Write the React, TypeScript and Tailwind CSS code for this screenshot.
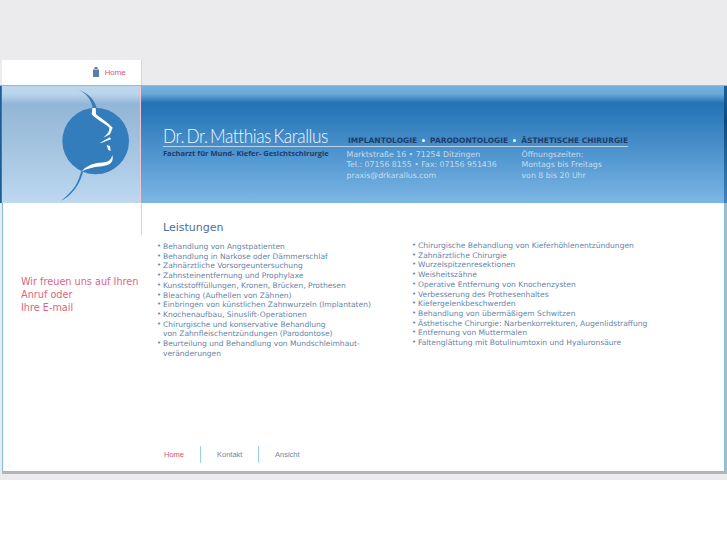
const left = [
  ["Behandlung von Angstpatienten"],
  ["Behandlung in Narkose oder Dämmerschlaf"],
  ["Zahnärztliche Vorsorgeuntersuchung"],
  ["Zahnsteinentfernung und Prophylaxe"],
  ["Kunststofffüllungen, Kronen, Brücken, Prothesen"],
  ["Bleaching (Aufhellen von Zähnen)"],
  ["Einbringen von künstlichen Zahnwurzeln (Implantaten)"],
  ["Knochenaufbau, Sinuslift-Operationen"],
  ["Chirurgische und konservative Behandlung", "von Zahnfleischentzündungen (Parodontose)"],
  ["Beurteilung und Behandlung von Mundschleimhaut-", "veränderungen"],
];
const right = [
  ["Chirurgische Behandlung von Kieferhöhlenentzündungen"],
  ["Zahnärztliche Chirurgie"],
  ["Wurzelspitzenresektionen"],
  ["Weisheitszähne"],
  ["Operative Entfernung von Knochenzysten"],
  ["Verbesserung des Prothesenhaltes"],
  ["Kiefergelenkbeschwerden"],
  ["Behandlung von übermäßigem Schwitzen"],
  ["Ästhetische Chirurgie: Narbenkorrekturen, Augenlidstraffung"],
  ["Entfernung von Muttermalen"],
  ["Faltenglättung mit Botulinumtoxin und Hyaluronsäure"],
];

function Services({ items }: { items: string[][] }) {
  return (
    <ul className="flex flex-col">
      {items.map((lines) => (
        <li key={lines[0]} className="flex text-[7.56px] leading-[9.7px] text-[#6583a8]">
          <span className="w-[6px] shrink-0 text-[7px]">•</span>
          <span className="whitespace-nowrap">
            {lines.map((l) => (
              <span key={l} className="block">{l}</span>
            ))}
          </span>
        </li>
      ))}
    </ul>
  );
}

function Face() {
  return (
    <svg width="95" height="117" viewBox="0 3 285 351" className="block">
      <circle cx="137" cy="168" r="100" fill="#347dbd" />
      <path d="M85 14 C110 25 125 45 128 70 L140 70 C135 45 115 25 85 14 Z" fill="#347dbd" />
      <path d="M95 256 L85 285 C75 310 55 330 33 347 C60 335 80 310 92 282 L101 256 Z" fill="#347dbd" />
      <path d="M127 69 L137 69 L138 88 C150 98 170 110 188 128 L180 148 L160 158 C168 150 180 140 178 128 C165 115 140 105 125 88 Z" fill="#fff" />
      <path d="M148 175 L165 165 L180 157 L183 163 L170 167 L160 172 Z" fill="#fff" />
      <path d="M170 180 L180 183 L182 198 L175 195 Z" fill="#fff" />
      <path d="M187 210 C192 232 180 240 160 243 C135 246 110 250 95 260 C105 245 125 235 150 233 C170 232 182 230 187 210 Z" fill="#fff" />
    </svg>
  );
}

export default function App() {
  return (
    <div className="h-[545px] w-[727px] overflow-hidden bg-white font-['DejaVu_Sans',sans-serif]">
      <div className="flex h-[480px] flex-col bg-[#ebebed] pt-[60px]">
        <div className="ml-[2px] flex h-[25px] w-[139.5px] items-center justify-end gap-[6px] border-r border-[#f3c6d0] bg-white pr-[15px]">
          <svg width="6" height="10" viewBox="0 0 6 10" className="mb-[2px]">
            <rect x="1.5" y="0" width="3" height="2" fill="#5b7da6" />
            <rect x="0" y="2.5" width="6" height="7.5" fill="#5b7da6" />
          </svg>
          <span className="font-['Liberation_Sans',sans-serif] text-[7.8px] text-[#d9536e]">Home</span>
        </div>

        <div className="flex h-[118px] border-t border-[#7fc0de] bg-[linear-gradient(90deg,#0f4f86_0px,#3d8cc4_2px)]">
          <div className="ml-[2px] w-[139px] shrink-0 border-r border-[#f3c6d0] bg-[linear-gradient(180deg,#bcd6ee_0px,#bad4ec_8px,#93b6d6_18px,#a3c3e0_60px,#bdd8f0_117px)] pl-[48px]">
            <Face />
          </div>
          <div className="flex flex-1 flex-col bg-[linear-gradient(180deg,#74b1e0_0px,#6aa8da_8px,#2272b5_17px,#4d93cd_65px,#7cb6e4_117px)] pl-[22px]">
            <div className="mt-[41px] flex h-[20px] w-[465px] items-end border-b border-[#b5d3ec]">
              <div className="w-[184px] origin-left scale-x-[0.905] whitespace-nowrap font-['Lato',sans-serif] text-[19px] leading-[20px] font-light tracking-[-0.45px] [word-spacing:-2px] text-[#eef6fc]">
                Dr. Dr. Matthias Karallus
              </div>
              <div className="ml-[1.5px] flex h-[12px] items-center gap-[5px] whitespace-nowrap text-[7.5px] leading-[9px] font-bold text-[#1d3c68]">
                <span>IMPLANTOLOGIE</span>
                <span className="size-[3px] rounded-full bg-white" />
                <span>PARODONTOLOGIE</span>
                <span className="size-[3px] rounded-full bg-white" />
                <span>ÄSTHETISCHE CHIRURGIE</span>
              </div>
            </div>
            <div className="flex">
              <div className="mt-[2px] w-[183.5px] whitespace-nowrap font-['Open_Sans',sans-serif] text-[7.5px] leading-[9px] font-bold text-[#1d3c68]">
                Facharzt für Mund- Kiefer- Gesichtschirurgie
              </div>
              <div className="mt-[3px] flex text-[7.82px] leading-[10.4px] whitespace-nowrap text-[#c4dcf0]">
                <div className="w-[175px]">
                  <div>Marktstraße 16 • 71254 Ditzingen</div>
                  <div>Tel.: 07156 8155 • Fax: 07156 951436</div>
                  <div>praxis@drkarallus.com</div>
                </div>
                <div>
                  <div>Öffnungszeiten:</div>
                  <div>Montags bis Freitags</div>
                  <div>von 8 bis 20 Uhr</div>
                </div>
              </div>
            </div>
          </div>
          <div className="w-[3px] shrink-0 bg-[linear-gradient(180deg,#1d5f96,#0d4a7e_30%,#3d86bd)]" />
        </div>

        <div className="ml-[2px] flex h-[269px] w-[723px] border-r border-b border-l border-[#7fc0de] bg-white shadow-[1px_1px_0_1px_#b5b5b8]">
          <div className="w-[138px] shrink-0">
            <div className="ml-[137.5px] h-[32px] w-px bg-[#f3c6d0]" />
            <div className="mt-[41px] whitespace-nowrap pl-[18px] font-['DejaVu_Sans',sans-serif] text-[9.7px] leading-[12.8px] font-normal text-[#dc6580]">
              <div>Wir freuen uns auf Ihren</div>
              <div>Anruf oder</div>
              <div>Ihre E-mail</div>
            </div>
          </div>
          <div className="flex flex-1 flex-col">
            <div className="flex h-[156px] pl-[16px]">
              <div className="w-[255px]">
                <h2 className="mt-[17px] pl-[6px] text-[11px] leading-[16px] font-normal text-[#4a6f9c]">Leistungen</h2>
                <div className="mt-[6px]"><Services items={left} /></div>
              </div>
              <div className="mt-[38px]"><Services items={right} /></div>
            </div>
            <div className="mt-[87px] flex h-[17px] items-center pl-[23px] font-['Liberation_Sans',sans-serif] text-[7.5px] text-[#6f88a8]">
              <span className="w-[36px] text-[#d9536e]">Home</span>
              <span className="h-[17px] w-px bg-[#9fd0ea]" />
              <span className="w-[57px] pl-[16px]">Kontakt</span>
              <span className="h-[17px] w-px bg-[#9fd0ea]" />
              <span className="pl-[16px]">Ansicht</span>
            </div>
          </div>
        </div>
      </div>
    </div>
  );
}
